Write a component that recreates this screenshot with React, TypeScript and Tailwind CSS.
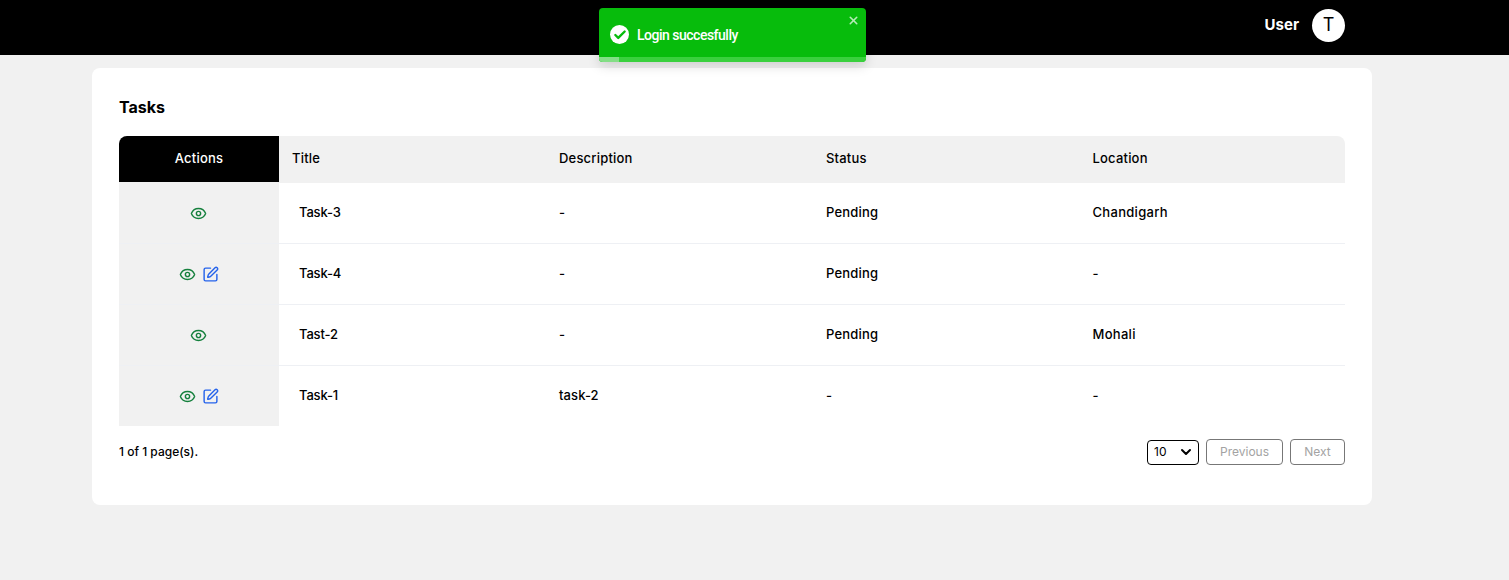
import { Check, Eye, SquarePen, X, ChevronDown } from "lucide-react"

const tasks = [
  { title: "Task-3", description: "-", status: "Pending", location: "Chandigarh", canEdit: false },
  { title: "Task-4", description: "-", status: "Pending", location: "-", canEdit: true },
  { title: "Tast-2", description: "-", status: "Pending", location: "Mohali", canEdit: false },
  { title: "Task-1", description: "task-2", status: "-", location: "-", canEdit: true },
]

const font = "font-['Inter','Liberation_Sans',sans-serif]"

function Toast() {
  return (
    <div className="absolute left-[599px] top-2 h-[54px] w-[267px] overflow-hidden rounded bg-[#07bc0c] shadow-[0_4px_12px_rgba(0,0,0,0.15)]">
      <div className="flex h-[53px] items-center pl-[11px]">
        <span className="flex h-[19px] w-[19px] items-center justify-center rounded-full bg-white">
          <Check className="h-[14px] w-[14px] text-[#07bc0c]" strokeWidth={4} />
        </span>
        <span className="ml-2 font-['Roboto',sans-serif] text-sm font-medium tracking-[-0.5px] text-white">Login succesfully</span>
      </div>
      <X className="absolute right-[6px] top-[6px] h-[13px] w-[13px] text-white opacity-70" strokeWidth={3} />
      <div className="absolute bottom-0 left-0 h-[5px] w-full bg-[#39d03d]">
        <div className="h-full w-[20px] bg-[#83de85]" />
      </div>
    </div>
  )
}

export default function App() {
  return (
    <div className={`relative min-h-[580px] bg-[#f1f1f1] text-black ${font}`}>
      <header className="flex h-[55px] items-center justify-end bg-black pb-[5px] pr-[164px]">
        <span className="text-[15px] font-bold text-white">User</span>
        <span className="ml-[13px] flex h-[33px] w-[33px] items-center justify-center rounded-full bg-white text-lg">T</span>
      </header>
      <Toast />
      <main className="px-[92px] pb-[75px] pt-[13px]">
        <div className="h-[437px] w-[1280px] rounded-lg bg-white px-[27px] pt-[28px]">
          <h1 className="text-base font-bold leading-[22px]">Tasks</h1>
          <table className="mt-[18px] w-full table-fixed border-collapse text-[13px]">
            <thead>
              <tr className="h-[47px] bg-[#f1f1f1]">
                <th className="w-[160px] rounded-tl-lg bg-black pb-[2px] text-center font-medium tracking-[0.2px] text-white shadow-[inset_0_-1px_0_#f1f1f1]">Actions</th>
                <th className="pb-[2px] pl-[13px] text-left font-medium tracking-[0.2px]">Title</th>
                <th className="pb-[2px] pl-[13.5px] text-left font-medium tracking-[0.2px]">Description</th>
                <th className="pb-[2px] pl-[14px] text-left font-medium tracking-[0.2px]">Status</th>
                <th className="rounded-tr-lg pb-[2px] pl-[14px] text-left font-medium tracking-[0.2px]">Location</th>
              </tr>
            </thead>
            <tbody>
              {tasks.map((t, i) => (
                <tr key={t.title} className={`${i === 0 ? "h-[60px]" : "h-[61px]"} ${i < 3 ? "border-b border-[#eef0f4]" : ""}`}>
                  <td className="bg-[#f1f1f1]">
                    <div className="flex items-center justify-center gap-[6px] pr-px pt-px">
                      <Eye className="h-[17px] w-[17px] text-[#15803d]" />
                      {t.canEdit && <SquarePen className="h-[17px] w-[17px] text-[#2563eb]" />}
                    </div>
                  </td>
                  <td className="pl-5 font-medium tracking-[-0.15px]">{t.title}</td>
                  <td className="pl-[13.5px] font-medium tracking-[0.1px]">{t.description}</td>
                  <td className="pl-[14px] font-medium tracking-[0.2px]">{t.status}</td>
                  <td className="pl-[14px] font-medium tracking-[0.3px]">{t.location}</td>
                </tr>
              ))}
            </tbody>
          </table>
          <div className="mt-[13px] flex items-center justify-between">
            <span className="text-xs font-medium">1 of 1 page(s).</span>
            <div className="flex items-center gap-[7px] text-xs">
              <div className="flex h-[25px] w-[52px] items-center justify-between rounded border border-black pl-[6px] pr-[4px]">
                10
                <ChevronDown className="h-4 w-4" strokeWidth={3} />
              </div>
              <button className="h-[26px] w-[77px] rounded border border-[#777] text-[#a3a3a3]">Previous</button>
              <button className="h-[26px] w-[55px] rounded border border-[#777] text-[#a3a3a3]">Next</button>
            </div>
          </div>
        </div>
      </main>
    </div>
  )
}
